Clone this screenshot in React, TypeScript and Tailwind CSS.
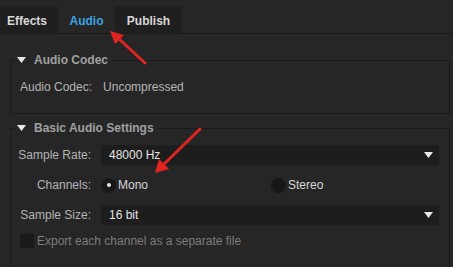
import React from 'react'

const font = { fontFamily: '"Liberation Sans", Arial, sans-serif' }

function Caret({ className = '' }: { className?: string }) {
  return (
    <svg width="9" height="6" viewBox="0 0 9 6" className={className}>
      <path d="M0 0 H9 L4.5 6 Z" fill="#e8e8e8" />
    </svg>
  )
}

function Select({ value }: { value: string }) {
  return (
    <div className="flex h-5 flex-1 items-center justify-between bg-[#1d1d1d] pl-2 pr-[6px] text-[#e4e4e4]">
      <span>{value}</span>
      <Caret />
    </div>
  )
}

function Radio({ checked, label }: { checked?: boolean; label: string }) {
  return (
    <div className="flex items-center gap-[2px]">
      <div className="flex h-[15px] w-[15px] items-center justify-center rounded-full bg-[#181818]">
        {checked && <div className="h-[4px] w-[4px] rounded-full bg-[#e8e8e8]" />}
      </div>
      <span className="text-[#d6d6d6]">{label}</span>
    </div>
  )
}

function Label({ children }: { children: React.ReactNode }) {
  return <span className="mr-[10px] w-[80px] whitespace-nowrap text-right text-[#b4b4b4]">{children}</span>
}

function Group({ title, children, className = '' }: { title: string; children: React.ReactNode; className?: string }) {
  return (
    <fieldset className={`ml-[10px] mr-[3px] border border-[#1a1a1a] ${className}`}>
      <legend className="ml-[4px] flex items-center gap-[8px] px-[2px] pr-[4px] font-bold text-[#a0a0a0]">
        <Caret />
        <span>{title}</span>
      </legend>
      {children}
    </fieldset>
  )
}

export default function App() {
  return (
    <div className="relative h-[267px] w-[453px] overflow-hidden bg-[#262626] text-[12px]" style={font}>
      {/* Tabs */}
      <div className="flex h-[34px] items-end border-b border-[#1a1a1a] bg-[#262626]">
        <div className="flex h-[27px] w-[58px] items-center justify-center bg-[#1f1f1f] pt-[3px] pr-[4px] font-bold text-[#d8d8d8]">Effects</div>
        <div className="flex h-[27px] w-[57px] items-center justify-center bg-[#262626] pt-[3px] font-bold text-[#3aa3e3]">Audio</div>
        <div className="flex h-[27px] w-[67px] items-center justify-center bg-[#1f1f1f] pt-[3px] font-bold text-[#d8d8d8]">Publish</div>
      </div>

      <div className="pt-[17px]">
        <Group title="Audio Codec" className="h-[63px]">
          <div className="flex gap-[11px] pl-[9px] pt-[9px] text-[#b4b4b4]">
            <span>Audio Codec:</span>
            <span>Uncompressed</span>
          </div>
        </Group>

        <Group title="Basic Audio Settings" className="mt-[5px] h-[200px]">
          <div className="flex flex-col pr-[10px] pt-[8px]">
            <div className="flex h-5 items-center">
              <Label>Sample Rate:</Label>
              <Select value="48000 Hz" />
            </div>
            <div className="mt-[10px] flex h-5 items-center">
              <Label>Channels:</Label>
              <div className="flex flex-1 items-center">
                <div className="w-[170px]">
                  <Radio checked label="Mono" />
                </div>
                <Radio label="Stereo" />
              </div>
            </div>
            <div className="mt-[10px] flex h-5 items-center">
              <Label>Sample Size:</Label>
              <Select value="16 bit" />
            </div>
            <div className="mt-[7px] flex items-center gap-[3px] pl-[9px]">
              <div className="h-[14px] w-[14px] bg-[#1a1a1a]" />
              <span className="text-[#7c7c7c]">Export each channel as a separate file</span>
            </div>
          </div>
        </Group>
      </div>

      {/* red annotation arrows */}
      <svg className="pointer-events-none absolute left-0 top-0" width="453" height="267">
        <line x1="145" y1="63" x2="118" y2="38" stroke="#e0241f" strokeWidth="3" strokeLinecap="round" />
        <polygon points="110,31 124,35 115,44" fill="#e0241f" />
        <line x1="200" y1="129" x2="162" y2="166" stroke="#e0241f" strokeWidth="3" strokeLinecap="round" />
        <polygon points="155,173 159,159 169,169" fill="#e0241f" />
      </svg>
    </div>
  )
}
